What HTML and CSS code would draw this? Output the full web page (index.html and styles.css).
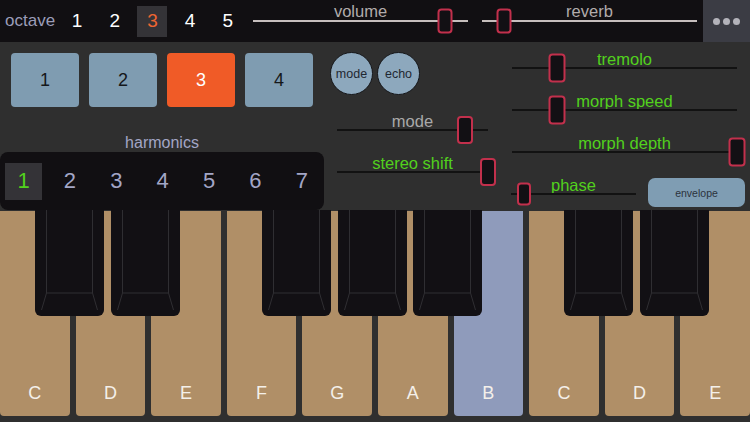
FILE: index.html
```html
<!DOCTYPE html>
<html>
<head>
<meta charset="utf-8">
<link rel="stylesheet" href="styles.css">
</head>
<body>
<div class="app">
  <header class="topbar">
    <div class="octave">
      <span class="octave-label">octave</span>
      <span class="octave-num">1</span>
      <span class="octave-num">2</span>
      <span class="octave-num is-active">3</span>
      <span class="octave-num">4</span>
      <span class="octave-num">5</span>
    </div>
    <div class="top-slider">
      <div class="top-label">volume</div>
      <div class="top-track"><span class="thumb thumb-top" style="--v:0.895"></span></div>
    </div>
    <div class="top-slider top-slider-gap">
      <div class="top-label">reverb</div>
      <div class="top-track"><span class="thumb thumb-top" style="--v:0.1"></span></div>
    </div>
    <div class="more"><span class="dot"></span><span class="dot"></span><span class="dot"></span></div>
  </header>

  <main class="panel">
    <section class="col-left">
      <div class="presets">
        <div class="preset">1</div>
        <div class="preset">2</div>
        <div class="preset is-active">3</div>
        <div class="preset">4</div>
      </div>
      <div class="harm-label">harmonics</div>
      <div class="harm-bar">
        <span class="harm is-active">1</span>
        <span class="harm">2</span>
        <span class="harm">3</span>
        <span class="harm">4</span>
        <span class="harm">5</span>
        <span class="harm">6</span>
        <span class="harm">7</span>
      </div>
    </section>

    <section class="col-mid">
      <div class="circles">
        <div class="circle">mode</div>
        <div class="circle">echo</div>
      </div>
      <div class="mid-sliders">
        <div class="slider slider-mid">
          <div class="slider-label is-muted">mode</div>
          <div class="track"><span class="thumb thumb-mid" style="--v:0.848"></span></div>
        </div>
        <div class="slider slider-mid">
          <div class="slider-label">stereo shift</div>
          <div class="track"><span class="thumb thumb-mid" style="--v:1"></span></div>
        </div>
      </div>
    </section>

    <section class="col-right">
      <div class="slider slider-right">
        <div class="slider-label">tremolo</div>
        <div class="track"><span class="thumb thumb-right" style="--v:0.202"></span></div>
      </div>
      <div class="slider slider-right">
        <div class="slider-label">morph speed</div>
        <div class="track"><span class="thumb thumb-right" style="--v:0.202"></span></div>
      </div>
      <div class="slider slider-right">
        <div class="slider-label">morph depth</div>
        <div class="track"><span class="thumb thumb-right" style="--v:1"></span></div>
      </div>
      <div class="phase-row">
        <div class="slider slider-phase">
          <div class="slider-label">phase</div>
          <div class="track"><span class="thumb thumb-phase" style="--v:0.104"></span></div>
        </div>
        <div class="envelope">envelope</div>
      </div>
    </section>
  </main>

  <section class="keyboard">
    <div class="white-keys">
      <div class="white">C</div>
      <div class="white">D</div>
      <div class="white">E</div>
      <div class="white">F</div>
      <div class="white">G</div>
      <div class="white">A</div>
      <div class="white is-pressed">B</div>
      <div class="white">C</div>
      <div class="white">D</div>
      <div class="white">E</div>
    </div>
    <div class="black bk-1"><svg class="bk-lines" viewBox="0 0 69 106"><path d="M11.5 0V83H57.5V0M11.5 83L6.5 100M57.5 83L62.5 100"/></svg></div>
    <div class="black bk-2"><svg class="bk-lines" viewBox="0 0 69 106"><path d="M11.5 0V83H57.5V0M11.5 83L6.5 100M57.5 83L62.5 100"/></svg></div>
    <div class="black bk-3"><svg class="bk-lines" viewBox="0 0 69 106"><path d="M11.5 0V83H57.5V0M11.5 83L6.5 100M57.5 83L62.5 100"/></svg></div>
    <div class="black bk-4"><svg class="bk-lines" viewBox="0 0 69 106"><path d="M11.5 0V83H57.5V0M11.5 83L6.5 100M57.5 83L62.5 100"/></svg></div>
    <div class="black bk-5"><svg class="bk-lines" viewBox="0 0 69 106"><path d="M11.5 0V83H57.5V0M11.5 83L6.5 100M57.5 83L62.5 100"/></svg></div>
    <div class="black bk-6"><svg class="bk-lines" viewBox="0 0 69 106"><path d="M11.5 0V83H57.5V0M11.5 83L6.5 100M57.5 83L62.5 100"/></svg></div>
    <div class="black bk-7"><svg class="bk-lines" viewBox="0 0 69 106"><path d="M11.5 0V83H57.5V0M11.5 83L6.5 100M57.5 83L62.5 100"/></svg></div>
  </section>
</div>
</body>
</html>
```

FILE: styles.css
```css
* { box-sizing: border-box; }
html, body { margin: 0; padding: 0; }
body {
  width: 750px;
  height: 422px;
  overflow: hidden;
  background: #2f2f2f;
  font-family: "Liberation Sans", Arial, sans-serif;
}
.app { width: 750px; height: 422px; }

/* ---------- top bar ---------- */
.topbar {
  display: flex;
  height: 42px;
  background: #110f12;
}
.octave {
  display: flex;
  align-items: center;
  width: 253px;
  padding-left: 5px;
}
.octave-label {
  font-size: 17px;
  color: #9b9db8;
  margin-right: 7px;
}
.octave-num {
  width: 30px;
  height: 31px;
  margin-right: 7.7px;
  display: flex;
  align-items: center;
  justify-content: center;
  font-size: 19px;
  color: #ffffff;
}
.octave-num.is-active {
  background: #343337;
  color: #ee6532;
}
.top-slider {
  width: 215px;
  padding-top: 2px;
}
.top-slider-gap { margin-left: 14px; }
.top-label {
  font-size: 16.5px;
  line-height: 18px;
  text-align: center;
  color: #b2acab;
}
.top-track {
  position: relative;
  height: 2px;
  margin-top: 0;
  background: #c6bebd;
}
.more {
  margin-left: auto;
  width: 47px;
  background: #3b3c44;
  display: flex;
  align-items: center;
  justify-content: center;
  gap: 3px;
}
.dot {
  width: 7px;
  height: 7px;
  border-radius: 50%;
  background: #b3b3ba;
}

/* ---------- thumbs ---------- */
.thumb {
  position: absolute;
  top: 50%;
  left: calc(var(--v) * 100%);
  transform: translate(-50%, -50%);
  background: #121014;
  border: 2px solid #c2304c;
  border-radius: 4px;
}
.thumb-top { width: 15px; height: 25px; }
.thumb-mid { width: 16px; height: 28px; }
.thumb-right { width: 17px; height: 29px; }
.thumb-phase { width: 14px; height: 23px; }

/* ---------- panel ---------- */
.panel {
  display: grid;
  grid-template-columns: 330px 175px 245px;
  grid-template-rows: 168px;
  height: 168px;
}
.col-left {
  display: flex;
  flex-direction: column;
  min-height: 0;
}
.presets {
  display: flex;
  gap: 10px;
  padding: 11px 0 0 11px;
}
.preset {
  width: 68px;
  height: 54px;
  border-radius: 4px;
  background: #7f9cb1;
  display: flex;
  align-items: center;
  justify-content: center;
  font-size: 18px;
  color: #15171a;
}
.preset.is-active {
  background: #f05b27;
  color: #ffffff;
}
.harm-label {
  margin-top: auto;
  width: 324px;
  text-align: center;
  font-size: 16px;
  line-height: 18px;
  color: #a3a6c6;
}
.harm-bar {
  flex: none;
  width: 324px;
  height: 58px;
  background: #110f12;
  border-radius: 8px;
  display: flex;
  align-items: center;
  gap: 9.4px;
  padding-left: 5px;
}
.harm {
  width: 37px;
  height: 37px;
  display: flex;
  align-items: center;
  justify-content: center;
  font-size: 22px;
  color: #a3a6c6;
}
.harm.is-active {
  background: #343337;
  color: #52d11d;
}

.col-mid { padding-top: 10px; }
.circles {
  display: flex;
  gap: 4px;
}
.circle {
  width: 43px;
  height: 43px;
  border-radius: 50%;
  background: #8da8bd;
  border: 1.5px solid #16171a;
  display: flex;
  align-items: center;
  justify-content: center;
  font-size: 12.5px;
  color: #1f2731;
}
.mid-sliders {
  margin-top: 17px;
  padding-left: 7px;
}

.slider { height: 42px; }
.slider-mid { width: 151px; }
.slider-right { width: 225px; }
.slider-phase { width: 125px; margin-left: -1px; height: 34px; }
.slider-label {
  font-size: 16.5px;
  line-height: 18px;
  text-align: center;
  color: #52d11d;
}
.slider-label.is-muted { color: #a9a9a9; }
.track {
  position: relative;
  height: 2px;
  margin-top: -1px;
  background: #121212;
}

.col-right {
  padding: 8px 0 0 7px;
}
.phase-row {
  display: flex;
  align-items: flex-start;
}
.envelope {
  margin-left: 12px;
  margin-top: 2px;
  width: 97px;
  height: 29px;
  border-radius: 7px;
  background: #7f9db3;
  display: flex;
  align-items: center;
  justify-content: center;
  font-size: 10.5px;
  color: #2b323c;
}

/* ---------- keyboard ---------- */
.keyboard {
  position: relative;
  height: 212px;
  padding-top: 1px;
}
.white-keys {
  display: flex;
  gap: 6px;
  height: 205px;
}
.white {
  flex: 1;
  background: #b08f67;
  border-radius: 0 0 4px 4px;
  display: flex;
  align-items: flex-end;
  justify-content: center;
  padding-bottom: 14px;
  font-size: 18px;
  line-height: 18px;
  color: #f4f0ea;
}
.white.is-pressed { background: #8f9bbb; }

.black {
  position: absolute;
  top: 0;
  width: 69px;
  height: 106px;
  background: #121014;
  border-radius: 0 0 6px 6px;
}
.bk-lines {
  display: block;
  width: 69px;
  height: 106px;
  fill: none;
  stroke: #2f2e32;
  stroke-width: 1;
}
.bk-1 { left: 35.1px; }
.bk-2 { left: 110.7px; }
.bk-3 { left: 261.9px; }
.bk-4 { left: 337.5px; }
.bk-5 { left: 413.1px; }
.bk-6 { left: 564.3px; }
.bk-7 { left: 639.9px; }
```
